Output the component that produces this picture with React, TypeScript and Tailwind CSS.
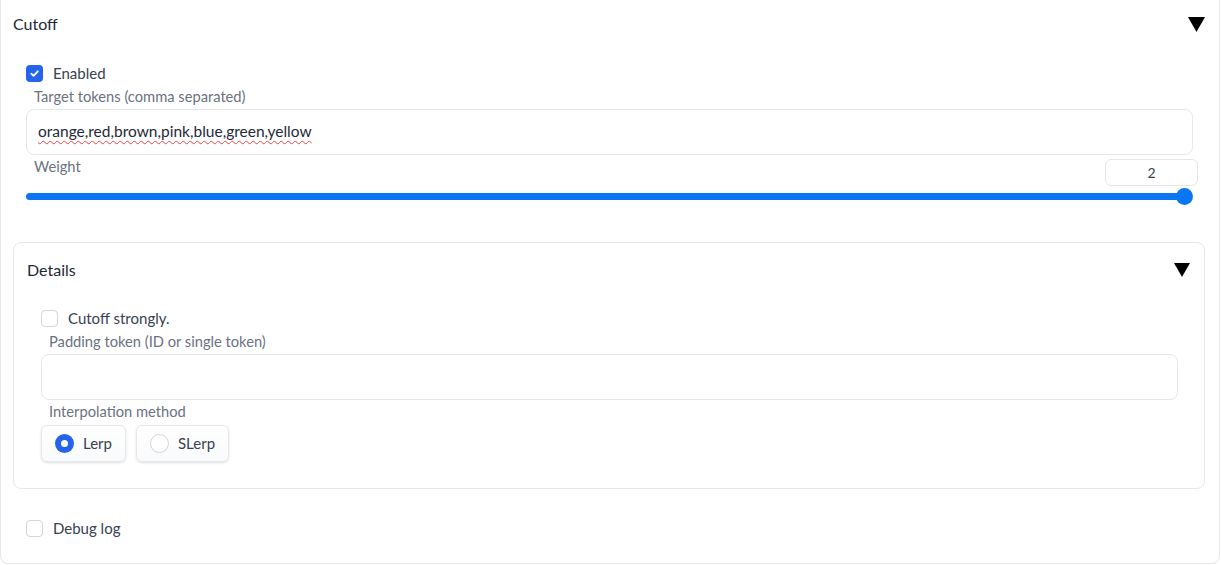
const Triangle = ({ w, h }: { w: number; h: number }) => (
  <svg width={w} height={h} viewBox={`0 0 ${w} ${h}`} className="shrink-0">
    <path d={`M0 0 H${w} L${w / 2} ${h} Z`} fill="#000" />
  </svg>
);

const Check = ({ on }: { on: boolean }) =>
  on ? (
    <span className="w-[17px] h-[17px] rounded-[4px] bg-[#2563eb] flex items-center justify-center shrink-0">
      <svg width="11" height="11" viewBox="0 0 12 12">
        <path d="M2.5 6.2 L5 8.6 L9.6 3.6" stroke="#fff" strokeWidth="2" fill="none" strokeLinecap="round" strokeLinejoin="round" />
      </svg>
    </span>
  ) : (
    <span className="w-[17px] h-[17px] rounded-[4px] border border-[#d1d5db] bg-white shrink-0" />
  );

const CheckRow = ({ on, label }: { on: boolean; label: string }) => (
  <div className="flex items-center gap-[10px] h-[18px]">
    <Check on={on} />
    <span className="text-[15px] text-[#374151]">{label}</span>
  </div>
);

const Label = ({ children }: { children: string }) => (
  <div className="pl-2 text-[14.7px] text-[#6b7280] leading-[18px]">{children}</div>
);

const Radio = ({ on, label }: { on: boolean; label: string }) => (
  <div className="flex items-center gap-[9px] h-[37px] px-[13px] rounded-md border border-[#e5e7eb] bg-gradient-to-b from-white to-[#f9fafb] shadow-sm">
    {on ? (
      <span className="w-[19px] h-[19px] rounded-full bg-[#2563eb] flex items-center justify-center">
        <span className="w-[7px] h-[7px] rounded-full bg-white" />
      </span>
    ) : (
      <span className="w-[19px] h-[19px] rounded-full border border-[#d1d5db] bg-white" />
    )}
    <span className="text-[15px] text-[#374151]">{label}</span>
  </div>
);

export default function App() {
  return (
    <div className="w-[1221px] h-[565px] bg-white font-['Lato',sans-serif] overflow-hidden">
      <div className="w-[1220px] h-[564px] border border-t-0 border-[#e5e7eb] rounded-b-lg px-[12px]">
        <div className="flex items-center justify-between h-[48px] pr-[2px]">
          <span className="text-[16px] text-[#1f2937]">Cutoff</span>
          <Triangle w={17} h={15} />
        </div>

        <div className="pl-[13px] pr-[8px]">
          <div className="mt-[16px]">
            <CheckRow on={true} label="Enabled" />
          </div>
          <div className="mt-[5px]">
            <Label>Target tokens (comma separated)</Label>
          </div>
          <div className="mt-[4px] mr-[6px] h-[46px] rounded-lg border border-[#e5e7eb] flex items-center px-[11px]">
            <span className="text-[15.5px] text-[#1f2937] underline decoration-wavy decoration-[#ef4444] decoration-1 underline-offset-[3px]">
              orange,red,brown,pink,blue,green,yellow
            </span>
          </div>
          <div className="flex items-start justify-between mt-[2px]">
            <Label>Weight</Label>
            <div className="w-[93px] h-[27px] mt-[2px] mr-[1px] rounded-md border border-[#e5e7eb] flex items-center justify-center text-[14px] text-[#374151]">
              2
            </div>
          </div>
          <div className="relative h-[20px] mt-[1px] mr-[6px]">
            <div className="absolute left-0 right-[7px] top-[6px] h-[7px] rounded-full bg-[#0b76f4]" />
            <div className="absolute right-0 top-[1px] w-[17px] h-[17px] rounded-full bg-[#0b76f4]" />
          </div>
        </div>

        <div className="mt-[35px] h-[247px] mr-[2px] rounded-lg border border-[#e5e7eb] px-[13px]">
          <div className="flex items-center justify-between h-[54px] pr-[1px]">
            <span className="text-[16px] text-[#1f2937]">Details</span>
            <Triangle w={16} h={14} />
          </div>
          <div className="pl-[14px] pr-[13px]">
            <div className="mt-[12px]">
              <CheckRow on={false} label="Cutoff strongly." />
            </div>
            <div className="mt-[5px]">
              <Label>Padding token (ID or single token)</Label>
            </div>
            <div className="mt-[4px] h-[46px] rounded-lg border border-[#e5e7eb]" />
            <div className="mt-[2px]">
              <Label>Interpolation method</Label>
            </div>
            <div className="mt-[5px] flex gap-[10px]">
              <Radio on={true} label="Lerp" />
              <Radio on={false} label="SLerp" />
            </div>
          </div>
        </div>

        <div className="pl-[13px] mt-[30px]">
          <CheckRow on={false} label="Debug log" />
        </div>
      </div>
    </div>
  );
}
